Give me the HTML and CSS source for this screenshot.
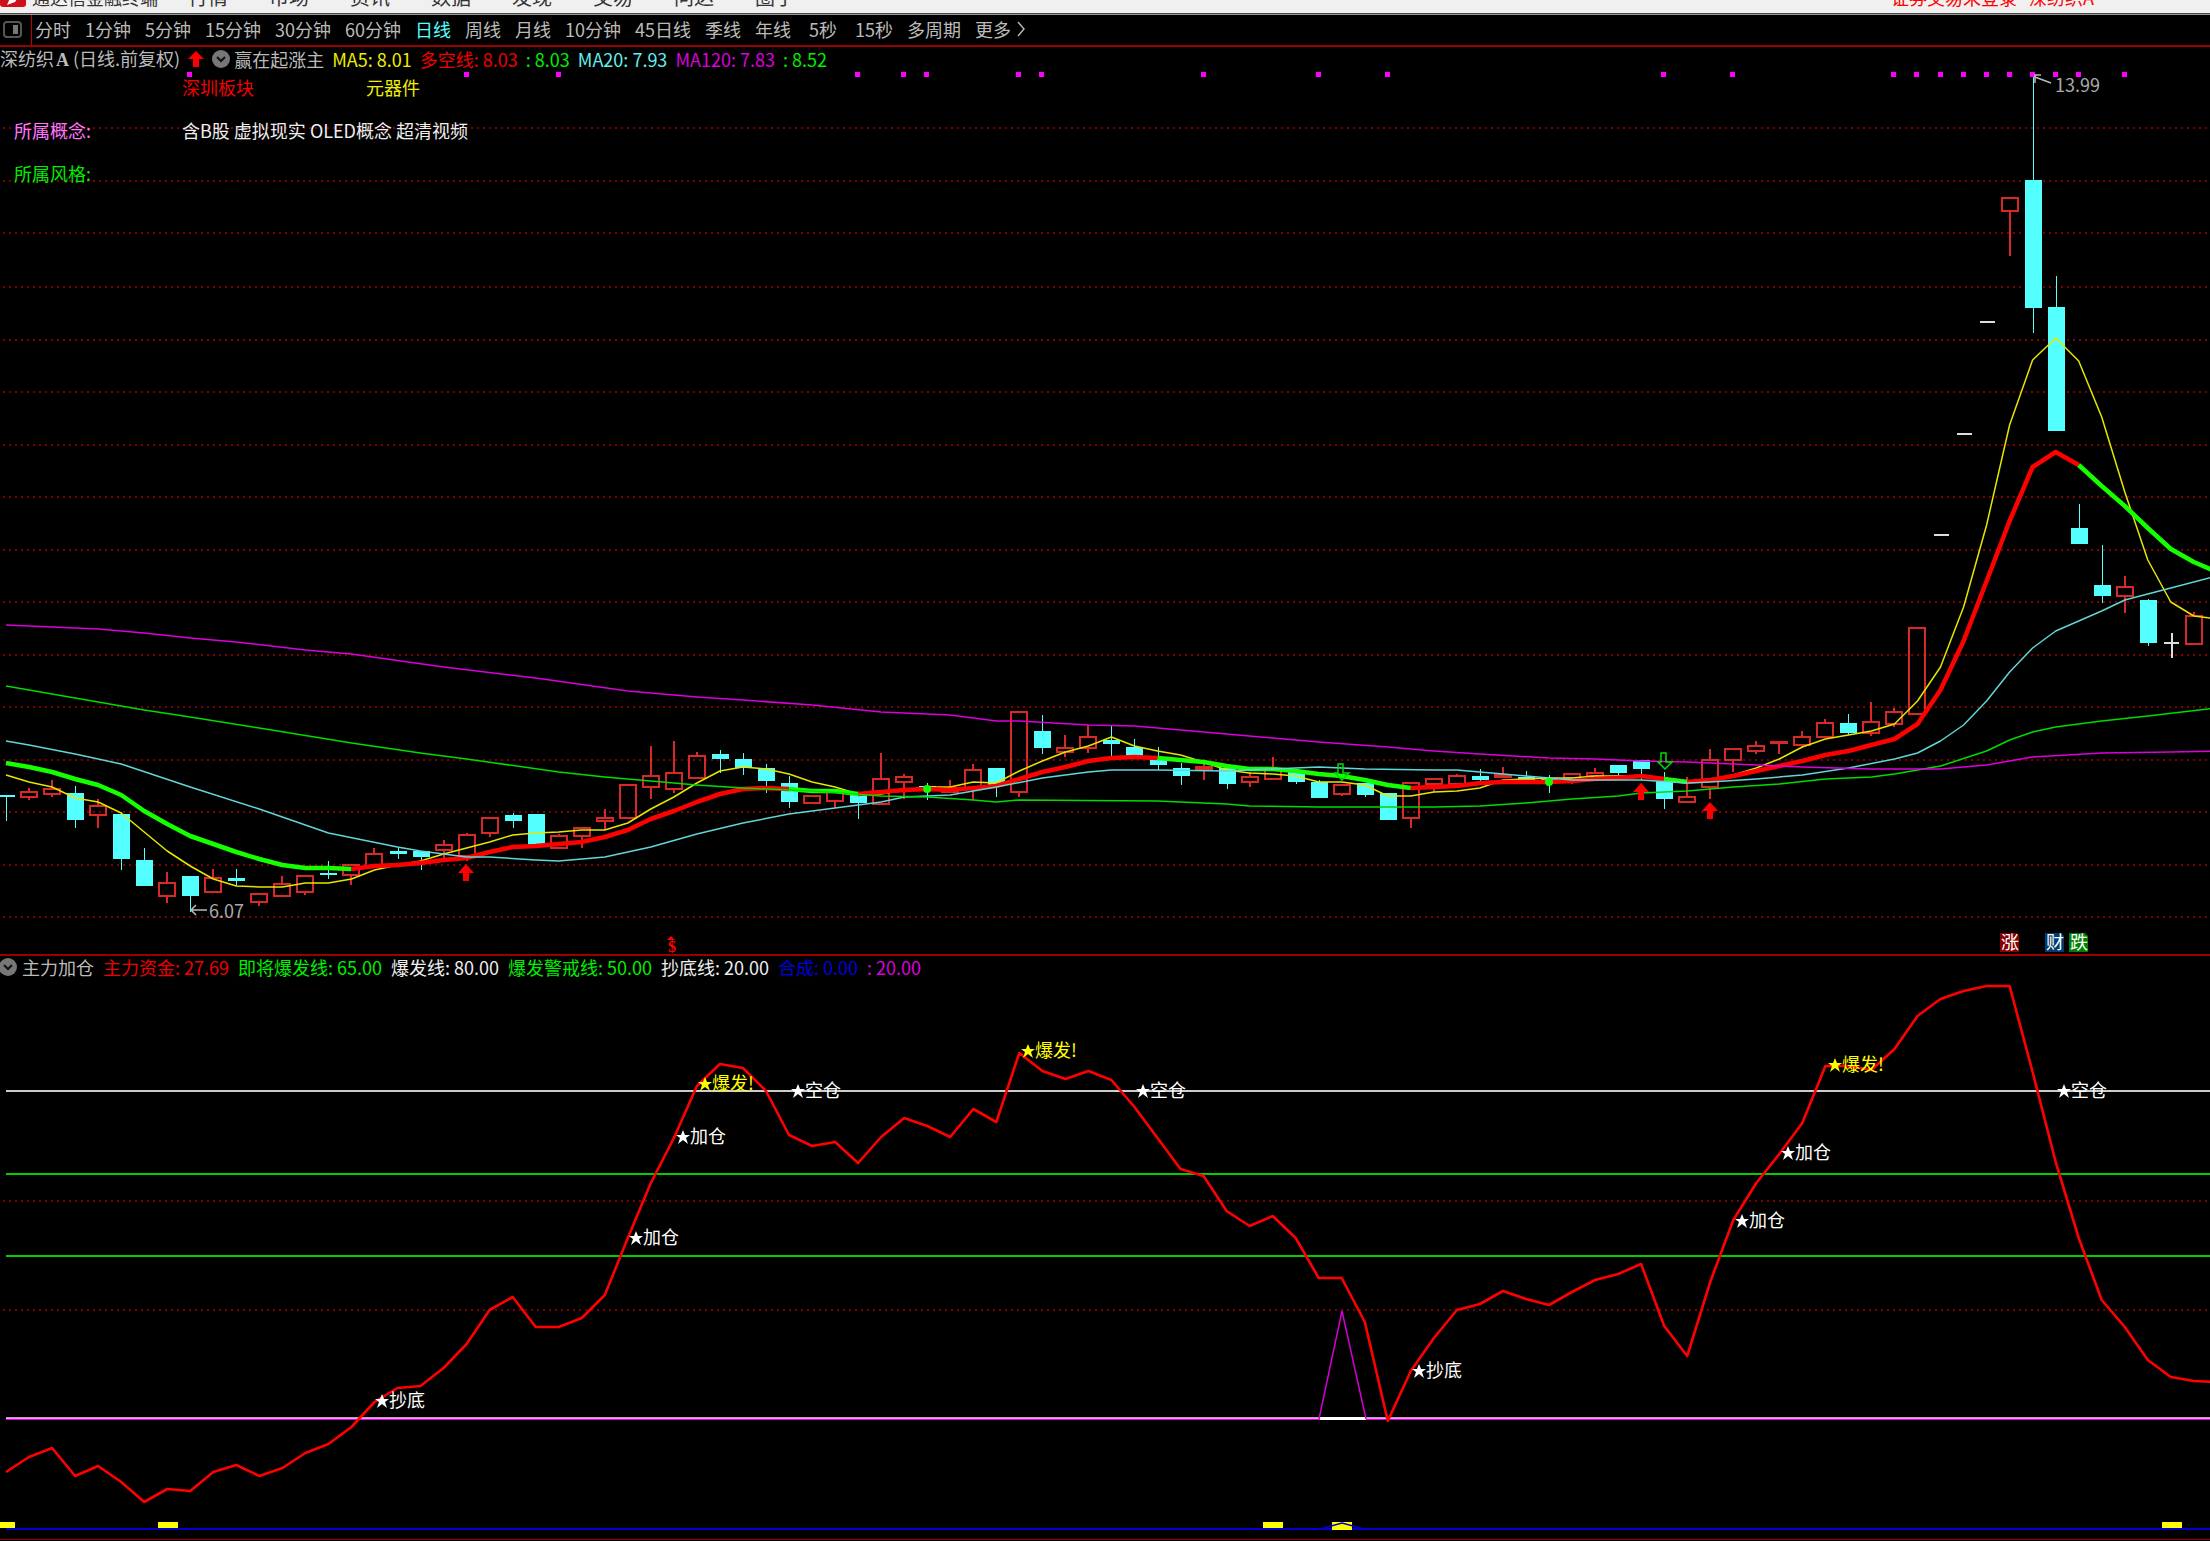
FILE: index.html
```html
<!DOCTYPE html>
<html lang="zh-CN">
<head>
<meta charset="utf-8">
<title>通达信金融终端</title>
<link rel="stylesheet" href="styles.css">
</head>
<body>
<header class="menubar">
  <svg class="logo" width="26" height="20" viewBox="0 0 26 20" aria-hidden="true"><rect width="26" height="20" rx="3" fill="#d01018"/><path d="M7 18 10 11 21 6 15 15Z" fill="#fff"/></svg>
  <span class="app-name">通达信金融终端</span>
  <nav class="menu">
    <a href="#">行情</a><a href="#">市场</a><a href="#">资讯</a><a href="#">数据</a><a href="#">发现</a><a href="#">交易</a><a href="#">问达</a><a href="#">圈子</a>
  </nav>
  <div class="account"><span>证券交易未登录</span><span>深纺织A</span></div>
</header>

<div class="periods">
  <button class="side-toggle" aria-label="侧栏"><svg width="20" height="18" viewBox="0 0 20 18"><rect x="1" y="1" width="17" height="15" rx="3" fill="none" stroke="#555" stroke-width="2"/><rect x="10" y="4" width="5" height="9" fill="#777"/></svg></button>
  <div class="period-list">
    <button>分时</button><button>1分钟</button><button>5分钟</button><button>15分钟</button><button>30分钟</button><button>60分钟</button><button class="active">日线</button><button>周线</button><button>月线</button><button>10分钟</button><button>45日线</button><button>季线</button><button>年线</button><button class="seconds">5秒</button><button class="seconds">15秒</button><button>多周期</button><button class="more">更多<svg width="9" height="16" viewBox="0 0 9 16"><path d="M1 1 7 8 1 15" fill="none" stroke="#bbb" stroke-width="1.4"/></svg></button>
  </div>
</div>

<main>
  <section class="panel">
    <div class="legend legend-main">
      <span class="stock">深纺织<b>A</b> (日线.前复权)</span>
      <svg width="16" height="18" viewBox="0 0 16 18"><path d="M8 1 16 9H11V17H5V9H0Z" fill="red"/></svg>
      <button class="fold" aria-label="指标菜单"><svg width="18" height="18" viewBox="0 0 18 18"><circle cx="9" cy="9" r="9" fill="#777"/><path d="M5 7 9 11 13 7" fill="none" stroke="#111" stroke-width="2"/></svg></button>
      <span class="indicator">赢在起涨主</span>
      <span class="yellow">MA5: 8.01</span><span class="red">多空线: 8.03</span><span class="green">: 8.03</span><span class="cyan">MA20: 7.93</span><span class="magenta">MA120: 7.83</span><span class="green">: 8.52</span>
    </div>
    <div class="plot">
      <svg id="price" class="chart" viewBox="0 71 2210 883" role="img" aria-label="K线图"></svg>
      <div class="concepts">
        <span></span><span class="red">深圳板块</span><span class="yellow">元器件</span>
        <span class="violet">所属概念:</span><span class="wide">含B股 虚拟现实 OLED概念 超清视频</span>
        <span class="green">所属风格:</span>
      </div>
    </div>
  </section>

  <section class="panel panel-sub">
    <div class="legend">
      <button class="fold" aria-label="指标菜单"><svg width="18" height="18" viewBox="0 0 18 18"><circle cx="8" cy="9" r="9" fill="#777"/><path d="M4 7 8 11 12 7" fill="none" stroke="#111" stroke-width="2"/></svg></button>
      <span class="indicator">主力加仓</span>
      <span class="red">主力资金: 27.69</span><span class="green">即将爆发线: 65.00</span><span class="white">爆发线: 80.00</span><span class="green">爆发警戒线: 50.00</span><span class="white">抄底线: 20.00</span><span class="blue">合成: 0.00</span><span class="magenta">: 20.00</span>
    </div>
    <svg id="flow" class="chart" viewBox="0 980 2210 561" role="img" aria-label="主力加仓"></svg>
  </section>
</main>
<script src="chart.js"></script>
</body>
</html>
```
FILE: styles.css
```css
* { box-sizing: border-box; }

body {
  margin: 0;
  background: #000;
  color: #bbb;
  font-family: "Noto Sans CJK SC", "Liberation Sans", sans-serif;
  font-size: 18px;
  line-height: 20px;
}

button {
  margin: 0;
  padding: 0;
  border: 0;
  background: none;
  color: inherit;
  font: inherit;
  cursor: pointer;
}

a { color: inherit; text-decoration: none; }
svg { display: block; }

.menubar {
  display: flex;
  align-items: flex-end;
  height: 15px;
  padding-bottom: 6px;
  overflow: hidden;
  background: #f0f0f0;
  border-bottom: 2px groove #999;
  color: #333;
  white-space: nowrap;
}

.logo { flex: none; }
.app-name { margin-left: 6px; }
.menu { display: flex; gap: 41px; margin-left: 30px; font-size: 20px; }
.account { display: flex; gap: 12px; margin-left: auto; margin-right: 116px; color: #f00; }

.periods {
  display: flex;
  height: 32px;
  border-bottom: 2px solid #900;
  white-space: nowrap;
}

.side-toggle {
  display: flex;
  align-items: center;
  width: 32px;
  padding-left: 3px;
  border-right: 1px solid #b00;
}

.period-list {
  display: flex;
  align-items: center;
  gap: 14px;
  padding-left: 3px;
  padding-bottom: 2px;
}

.period-list .active { color: #54ffff; }
.seconds { margin-left: 4px; }
.more { display: flex; align-items: center; gap: 6px; }

.legend {
  display: flex;
  align-items: center;
  gap: 9px;
  height: 24px;
  padding-bottom: 3px;
  white-space: nowrap;
}

.legend-main { gap: 8px; padding-bottom: 0; }
.legend b { font-family: "Liberation Serif", serif; margin-left: 2px; }
.fold { margin-right: -4px; }

.panel-sub { border-top: 2px solid #900; }
.panel-sub .fold { margin-right: -5px; }

.plot { position: relative; }
.chart { width: 100%; height: auto; }

.concepts {
  position: absolute;
  top: -6px;
  left: 14px;
  display: grid;
  grid-template-columns: 168px 184px auto;
  grid-auto-rows: 43px;
  align-items: center;
  color: #eee;
  white-space: nowrap;
}

.concepts .wide { grid-column: span 2; }

.yellow { color: #ee0; }
.red { color: #f00000; }
.green { color: #0e0; }
.cyan { color: #6ee; }
.magenta { color: #d0d; }
.violet { color: #f7f; }
.white { color: #eee; }
.blue { color: #00d; }

.chart text { font-size: 18px; }
.chart .price-tag { fill: #aaa; }
.chart .badge { fill: #fff; }
.chart .dollar { fill: #f00; font-family: "Liberation Serif", serif; font-size: 16px; font-weight: bold; }
.grid { stroke: #800000; stroke-width: 2; stroke-dasharray: 2 4; shape-rendering: crispEdges; }
.candle { shape-rendering: crispEdges; stroke-width: 2; }
.up { stroke: #d82828; fill: none; }
.down { stroke: #54ffff; fill: #54ffff; stroke-width: 1; }
.flat { stroke: #ddd; }
.line { fill: none; stroke-linejoin: round; }
```
FILE: chart.js
```js
const NS = 'http://www.w3.org/2000/svg';
const STEP = 23.03;
const x = i => 6 + STEP * i;

function add(svg, tag, attrs, text) {
  const el = document.createElementNS(NS, tag);
  for (const k in attrs) el.setAttribute(k, attrs[k]);
  if (text) el.textContent = text;
  svg.appendChild(el);
}

function line(svg, pts, color, width) {
  add(svg, 'polyline', {
    class: 'line', stroke: color, 'stroke-width': width,
    points: pts.map(p => x(p[0]).toFixed(1) + ',' + p[1]).join(' ')
  });
}

const series = (start, values) => values.map((v, k) => [start + k, v]);
const pairs = s => s.trim().split(/\s+/).map(p => p.split(':').map(Number));

const price = document.getElementById('price');
[128, 181, 233, 287, 340, 392, 445, 497, 550, 602, 655, 707, 760, 812, 865, 917].forEach(y =>
  add(price, 'line', { class: 'grid', x1: 3, x2: 2210, y1: y, y2: y }));

// One row per bar: index, direction, high, body top, body bottom, low
const bars = `
0 c 795 795 796 821|1 r 788 792 797 800|2 r 780 789 794 797|3 c 786 793 819 828|4 r 799 806 815 828
5 c 812 814 858 870|6 c 848 860 885 886|7 r 872 883 896 903|8 c 876 876 895 912|9 r 869 878 892 892
10 c 869 878 880 886|11 r 893 894 902 906|12 r 876 884 896 896|13 r 876 876 892 895|14 c 861 873 874 879
15 r 865 865 875 885|16 r 848 854 866 866|17 c 847 851 853 859|18 c 851 851 856 870|19 r 840 845 850 859
20 r 833 835 856 861|21 r 818 818 833 837|22 c 813 815 820 828|23 c 814 814 845 848|24 r 834 836 848 848
25 r 828 828 836 848|26 r 809 818 821 830|27 r 785 785 818 818|28 r 746 776 787 799|29 r 741 773 789 793
30 r 752 756 778 778|31 c 750 754 758 773|32 c 753 759 767 775|33 c 764 768 780 793|34 c 776 783 801 808
35 r 796 796 803 803|36 r 792 792 801 808|37 c 794 794 802 819|38 r 753 779 804 805|39 r 774 777 782 799
40 c 783 786 787 800|41 r 780 788 792 792|42 r 764 770 789 800|43 c 768 768 785 797|44 r 712 712 792 797
45 c 715 731 747 754|46 r 735 748 752 757|47 r 725 737 748 753|48 c 725 740 743 756|49 c 739 747 755 755
50 c 747 759 764 770|51 c 763 768 775 785|52 r 763 767 769 780|53 c 768 768 783 789|54 r 772 777 782 787
55 r 757 769 779 779|56 c 772 772 781 784|57 c 780 782 797 797|58 r 785 785 794 796|59 c 783 783 794 797
60 c 793 793 819 819|61 r 783 783 818 828|62 r 779 779 784 792|63 r 774 776 784 784|64 c 769 776 779 781
65 r 767 775 777 777|66 c 771 777 779 779|67 c 775 778 779 793|68 r 774 774 778 784|69 r 768 773 776 776
70 c 765 765 772 775|71 c 760 760 768 780|72 c 772 781 798 809|73 r 777 797 802 802|74 r 749 760 787 799
75 r 749 749 760 772|76 r 741 746 751 754|77 r 742 742 743 754|78 r 731 737 745 748|79 r 719 723 737 737
80 c 714 723 732 735|81 r 702 722 733 736|82 r 708 712 724 727|83 r 628 628 714 714|87 r 198 198 211 256
88 c 77 180 307 333|89 c 276 307 430 430|90 c 504 528 543 543|91 c 545 585 595 603|92 r 576 587 596 613
93 c 599 600 642 646|95 r 612 616 644 644`;

bars.trim().split(/[|\n]/).forEach(row => {
  const [i, dir, ...v] = row.split(' ');
  const [hi, top, bot, lo] = v.map(Number);
  const cx = Math.round(x(+i));
  const cls = 'candle ' + (dir === 'c' ? 'down' : 'up');
  if (hi < top) add(price, 'line', { class: cls, x1: cx, x2: cx, y1: hi, y2: top });
  if (lo > bot) add(price, 'line', { class: cls, x1: cx, x2: cx, y1: bot, y2: lo });
  add(price, 'rect', { class: cls, x: cx - 8, y: top, width: 16, height: bot - top });
});
[[84, 535], [85, 434], [86, 322], [94, 643]].forEach(([i, y]) =>
  add(price, 'line', { class: 'candle flat', x1: x(i) - 7, x2: x(i) + 8, y1: y, y2: y }));
add(price, 'line', { class: 'candle flat', x1: 2172, x2: 2172, y1: 633, y2: 658 });

const ma5 = series(0, [775,782,787,798,802,813,832,851,866,879,886,887,887,883,883,879,870,865,861,854,848,842,835,833,832,830,830,823,809,797,783,771,767,769,774,782,787,794,794,790,787,787,782,783,771,761,752,746,737,746,751,755,762,770,773,774,776,782,782,785,796,796,792,791,788,780,779,778,778,776,776,776,778,781,780,775,768,759,747,739,735,731,724,701,667,607,525,425,360,338,361,417,492,560,602,616,619]);
const trend = series(0, [763,767,772,779,785,795,811,824,836,844,852,859,865,868,868,869,866,865,863,860,858,852,847,846,844,842,837,830,819,811,802,794,789,788,789,791,791,794,792,790,789,790,788,786,779,772,767,761,758,757,758,760,762,766,769,769,771,774,776,780,785,788,787,786,783,782,782,782,781,779,778,776,779,782,780,776,771,766,761,755,751,745,739,724,690,641,581,521,467,452,465,486,506,528,549,562,572]);
const ma20 = pairs('0:741 1:745 3:754 5:764 8:787 11:809 14:833 17:847 18:851 19:854 20:857 21:857 23:860 24:861 26:857 28:847 30:834 32:823 34:814 36:808 38:802 39:797 41:795 42:791 43:787 45:778 47:772 48:770 50:770 53:771 55:769 57:767 59:769 62:770 63:770 64:772 66:776 68:780 71:780 73:783 74:782 76:779 78:775 80:768 82:759 83:753 84:741 85:725 86:701 87:672 88:648 89:631 91:611 92:600 94:588 96:576');
const ma60 = pairs('0:686 3:698 6:710 8:717 11:728 15:743 18:753 20:759 24:772 26:777 28:781 30:785 32:788 35:791 38:796 40:797 42:800 43:802 44:800 50:801 53:804 54:806 57:807 62:807 64:806 66:803 68:799 70:796 71:793 73:791 75:787 77:784 79:779 81:777 82:774 84:766 86:751 87:740 88:732 89:727 91:721 93:716 96:708');
const ma120 = pairs('0:625 4:629 6:633 8:638 10:642 13:650 15:654 19:667 23:678 27:691 30:697 32:700 35:705 38:712 41:715 43:721 44:721 47:725 49:726 52:732 55:738 57:742 60:747 62:751 64:754 67:758 69:759 71:761 73:762 75:764 78:767 81:769 84:769 86:765 88:757 91:753 94:752 96:751');

line(price, ma5, '#e6e600', 1.5);
const runs = [[0, 15, 'g'], [15, 34, 'r'], [34, 37, 'g'], [37, 50, 'r'], [50, 61, 'g'], [61, 72, 'r'], [72, 73, 'g'], [73, 90, 'r'], [90, 96, 'g']];
runs.forEach(([a, b, c]) => line(price, trend.slice(a, b + 1), c === 'g' ? '#14ff00' : '#ff0000', 4.5));
line(price, ma20, '#62d6d6', 1.5);
line(price, ma60, '#00dc00', 1.5);
line(price, ma120, '#dc00dc', 1.5);
[[40, 789], [67, 782]].forEach(([i, y]) => add(price, 'circle', { cx: x(i), cy: y, r: 4, fill: '#14ff00' }));

[8, 20, 24, 37, 39, 40, 44, 45, 52, 57, 60, 72, 75, 82, 83, 84, 85, 86, 87, 88, 89, 90, 92].forEach(i =>
  add(price, 'rect', { x: Math.round(x(i)) - 3, y: 72, width: 5, height: 5, fill: '#f0f' }));

[[466, 864], [1641, 783], [1710, 802]].forEach(([cx, y]) =>
  add(price, 'path', { d: `M${cx} ${y}l8 9h-5v8h-6v-8h-5z`, fill: '#f00' }));
[[1341, 764], [1664, 753]].forEach(([cx, y]) =>
  add(price, 'path', { d: `M${cx - 3} ${y}h5v9h6l-7 7l-7 -7h3z`, fill: 'none', stroke: '#0d0', 'stroke-width': 1.5 }));

add(price, 'path', { d: 'M2051 83 2035 77M2041 75H2035V83', fill: 'none', stroke: '#bbb', 'stroke-width': 1.5 });
add(price, 'text', { class: 'price-tag', x: 2055, y: 92 }, '13.99');
add(price, 'path', { d: 'M207 910H191M196 905 191 910 196 915', fill: 'none', stroke: '#bbb', 'stroke-width': 1.5 });
add(price, 'text', { class: 'price-tag', x: 209, y: 918 }, '6.07');

add(price, 'path', { d: 'M671 936l4 4h-8z', fill: '#f00' });
add(price, 'text', { class: 'dollar', x: 668, y: 952 }, '$');
[[2000, '#880000', '涨'], [2045, '#003c70', '财'], [2069, '#008000', '跌']].forEach(([bx, bg, t]) => {
  add(price, 'path', { d: `M${bx} 933h16l3 3v16h-19z`, fill: bg });
  add(price, 'text', { class: 'badge', x: bx + 1, y: 949 }, t);
});

const flow = document.getElementById('flow');
[1201, 1310].forEach(y => add(flow, 'line', { class: 'grid', x1: 3, x2: 2210, y1: y, y2: y }));
const level = (y, color, h) => add(flow, 'rect', { x: 6, y, width: 2204, height: h, fill: color });
level(1090, '#ccc', 2);
level(1173, '#0c0', 2);
level(1255, '#0c0', 2);
level(1417, '#b8a0b8', 1);
level(1418, '#ff98ff', 1);
level(1419, '#e000e0', 1);
level(1528, '#0000d0', 2);
add(flow, 'rect', { x: 0, y: 1539, width: 2210, height: 1, fill: '#900' });
[[0, 15], [158, 20], [1263, 20], [1332, 20], [2162, 20]].forEach(([bx, w]) =>
  add(flow, 'rect', { x: bx, y: 1522, width: w, height: bx === 1332 ? 8 : 6, fill: '#ff0' }));
add(flow, 'path', { d: 'M1320 1529 1342 1523 1364 1529', fill: 'none', stroke: '#0000d0', 'stroke-width': 1.5 });

line(flow, series(0, [1472,1457,1448,1476,1466,1482,1502,1489,1491,1472,1465,1476,1468,1453,1444,1427,1402,1388,1386,1368,1344,1310,1297,1327,1327,1318,1295,1238,1183,1138,1086,1064,1068,1091,1135,1146,1142,1163,1137,1118,1126,1137,1109,1122,1053,1071,1079,1071,1080,1107,1138,1169,1176,1211,1226,1216,1238,1278,1278,1322,1421,1371,1338,1310,1304,1291,1299,1305,1292,1280,1274,1264,1326,1356,1282,1220,1183,1154,1123,1066,1066,1070,1049,1016,999,991,986,986,1072,1162,1238,1300,1327,1360,1377,1381,1382]), '#ff0000', 2.6);
add(flow, 'rect', { x: 1320, y: 1417, width: 46, height: 3, fill: '#fff' });
add(flow, 'path', { d: 'M1319 1419 1342 1311 1366 1419', fill: 'none', stroke: '#d000d0', 'stroke-width': 1.5 });

[[698, 1084, '爆发!'], [676, 1137, '加仓'], [629, 1238, '加仓'], [375, 1401, '抄底'], [791, 1091, '空仓'],
 [1021, 1051, '爆发!'], [1136, 1091, '空仓'], [1412, 1371, '抄底'], [1828, 1065, '爆发!'],
 [1781, 1153, '加仓'], [1735, 1221, '加仓'], [2057, 1091, '空仓']].forEach(([sx, cy, t]) => {
  const fill = t === '爆发!' ? '#ff0' : '#fff';
  add(flow, 'path', { d: `M${sx + 7} ${cy - 7}l2 5h5l-4 3 2 6-5-4-5 4 2-6-4-3h5z`, fill });
  add(flow, 'text', { x: sx + 14, y: cy + 6, fill }, t);
});
```
